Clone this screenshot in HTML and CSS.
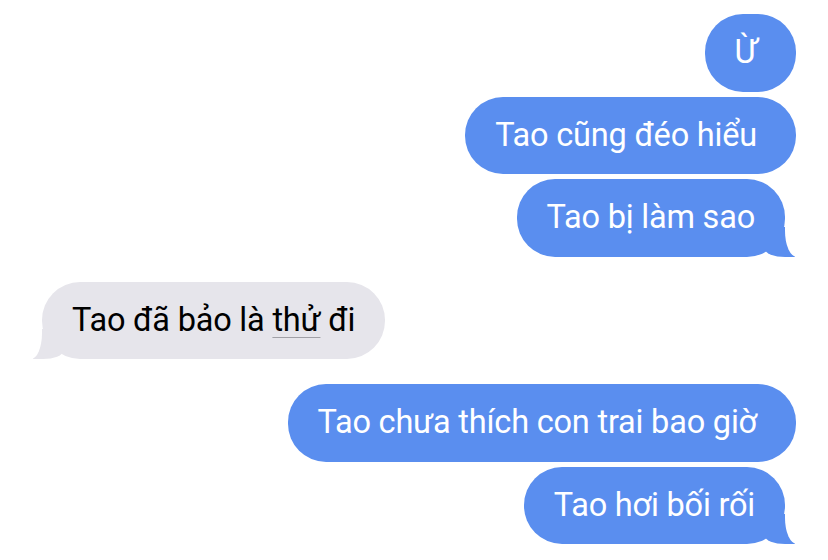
FILE: index.html
```html
<!DOCTYPE html>
<html lang="vi">
<head>
<meta charset="utf-8">
<title>Tin nhắn</title>
<link rel="stylesheet" href="styles.css">
</head>
<body>
<main class="thread">
  <div class="group">
    <div class="bubble sent">Ừ</div>
    <div class="bubble sent">Tao cũng đéo hiểu</div>
    <div class="bubble sent tail">Tao bị làm sao</div>
  </div>
  <div class="group">
    <div class="bubble received tail">Tao đã bảo là <span class="lookup">thử</span> đi</div>
  </div>
  <div class="group">
    <div class="bubble sent">Tao chưa thích con trai bao giờ</div>
    <div class="bubble sent tail">Tao hơi bối rối</div>
  </div>
</main>
</body>
</html>
```
FILE: styles.css
```css
html, body {
  margin: 0;
  padding: 0;
  background: #ffffff;
}

.thread {
  display: flex;
  flex-direction: column;
  gap: 25px;
  padding: 14px 0 0;
  font-family: Roboto, "Noto Sans", "DejaVu Sans", sans-serif;
  font-size: 32.5px;
  letter-spacing: -0.2px;
}

.group {
  display: flex;
  flex-direction: column;
  gap: 5px;
}

.bubble {
  position: relative;
  box-sizing: border-box;
  height: 77.5px;
  line-height: 77.5px;
  padding: 0 30px;
  border-radius: 38px;
  white-space: nowrap;
}

.sent {
  align-self: flex-end;
  margin-right: 32px;
  padding-right: 39px;
  background: #5a8eef;
  color: #ffffff;
}

.sent.tail {
  margin-right: 43px;
  padding-right: 30px;
}

.received {
  align-self: flex-start;
  margin-left: 42px;
  background: #e6e5eb;
  color: #000000;
}

.lookup {
  text-decoration: underline;
  text-decoration-color: #a0a0a6;
  text-decoration-thickness: 1px;
  text-underline-offset: 6px;
}

.tail::before,
.tail::after {
  content: "";
  position: absolute;
  bottom: 0;
  height: 30px;
}

.sent.tail::before {
  right: -10px;
  width: 30px;
  background: #5a8eef;
  border-bottom-left-radius: 20px 8px;
}

.sent.tail::after {
  right: -16px;
  width: 16px;
  background: #ffffff;
  border-bottom-left-radius: 12px 26px;
}

.received.tail::before {
  left: -9px;
  width: 30px;
  background: #e6e5eb;
  border-bottom-right-radius: 20px 8px;
}

.received.tail::after {
  left: -16px;
  width: 16px;
  background: #ffffff;
  border-bottom-right-radius: 11px 26px;
}
```
